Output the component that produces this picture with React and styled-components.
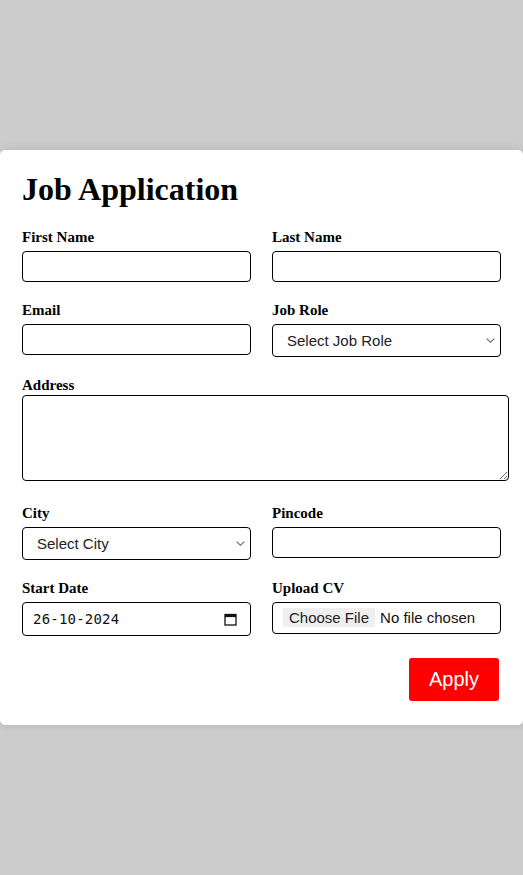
import React from "react";
import styled, { createGlobalStyle } from "styled-components";

const chevron =
  "data:image/svg+xml,%3Csvg xmlns='http://www.w3.org/2000/svg' width='9' height='5' viewBox='0 0 9 5'%3E%3Cpolyline points='0.6,0.6 4.5,4.2 8.4,0.6' fill='none' stroke='%23707070' stroke-width='1.2'/%3E%3C/svg%3E";

export default function App() {
  return (
    <>
      <GlobalStyle />
      <Card>
        <Title>Job Application</Title>
        <Form onSubmit={(e) => e.preventDefault()}>
          <Grid>
            <Field>
              <Label>First Name</Label>
              <Input type="text" />
            </Field>
            <Field>
              <Label>Last Name</Label>
              <Input type="text" />
            </Field>
            <Field>
              <Label>Email</Label>
              <Input type="email" />
            </Field>
            <Field>
              <Label>Job Role</Label>
              <Select defaultValue="">
                <option value="">Select Job Role</option>
                <option>Developer</option>
                <option>Designer</option>
              </Select>
            </Field>
            <Field $wide>
              <Label $tight>Address</Label>
              <TextArea />
            </Field>
            <Field>
              <Label>City</Label>
              <Select defaultValue="">
                <option value="">Select City</option>
                <option>Mumbai</option>
                <option>Delhi</option>
              </Select>
            </Field>
            <Field>
              <Label>Pincode</Label>
              <Input type="text" />
            </Field>
            <Field>
              <Label>Start Date</Label>
              <DateBox>
                <DateText type="text" defaultValue="26-10-2024" />
                <CalendarIcon />
              </DateBox>
            </Field>
            <Field>
              <Label>Upload CV</Label>
              <FileInput type="file" />
            </Field>
          </Grid>
          <Actions>
            <ApplyButton type="submit">Apply</ApplyButton>
          </Actions>
        </Form>
      </Card>
    </>
  );
}

function CalendarIcon() {
  return (
    <svg width="13" height="13" viewBox="0 0 13 13" aria-hidden="true">
      <rect x="1" y="1.5" width="11" height="10.5" fill="none" stroke="#111" strokeWidth="1.3" />
      <rect x="1" y="1.5" width="11" height="2.6" fill="#111" />
    </svg>
  );
}

const GlobalStyle = createGlobalStyle`
  body {
    margin: 0;
    background: #cccccc;
    font-family: "Liberation Serif", "Times New Roman", serif;
  }
  #root {
    min-height: 100vh;
    display: flex;
    align-items: center;
    justify-content: center;
  }
`;

const Card = styled.div`
  background: #fff;
  border-radius: 5px;
  box-shadow: 0 0 10px rgba(0, 0, 0, 0.12);
  box-sizing: border-box;
  max-width: 600px;
  padding: 21px 22px 24px;
  width: 100%;
`;

const Title = styled.h1`
  color: #000;
  font-size: 32px;
  font-weight: bold;
  margin: 0 0 21px;
`;

const Form = styled.form`
  display: flex;
  flex-direction: column;
`;

const Grid = styled.div`
  display: grid;
  gap: 20px 21px;
  grid-template-columns: 1fr 1fr;
`;

const Field = styled.div`
  display: flex;
  flex-direction: column;
  grid-column: ${({ $wide }) => ($wide ? "1 / -1" : "auto")};
`;

const Label = styled.label`
  color: #000;
  font-size: 15px;
  font-weight: bold;
  margin-bottom: ${({ $tight }) => ($tight ? "1px" : "5px")};
`;

const Input = styled.input`
  border: 1px solid #000;
  border-radius: 4px;
  box-sizing: border-box;
  font-family: "Liberation Sans", Arial, sans-serif;
  font-size: 15px;
  height: 31px;
  padding: 0 10px;
  width: 100%;
`;

const Select = styled.select`
  appearance: none;
  background: #fff url("${chevron}") no-repeat right 5px center / 9px 5px;
  border: 1px solid #000;
  border-radius: 4px;
  box-sizing: border-box;
  color: #222;
  font-family: "Liberation Sans", Arial, sans-serif;
  font-size: 15px;
  height: 33px;
  padding: 0 24px 0 14px;
  width: 100%;
`;

const TextArea = styled.textarea`
  border: 1px solid #000;
  border-radius: 4px;
  box-sizing: content-box;
  height: 80px;
  margin-bottom: 4px;
  padding: 2px 3px;
  resize: vertical;
  width: 100%;
`;

const DateBox = styled.div`
  align-items: center;
  border: 1px solid #000;
  border-radius: 4px;
  box-sizing: border-box;
  display: flex;
  height: 34px;
  padding: 0 13px 0 10px;
`;

const DateText = styled.input`
  background: none;
  border: 0;
  color: #111;
  flex: 1;
  font-family: "DejaVu Sans Mono", "Liberation Mono", monospace;
  font-size: 14px;
  letter-spacing: 0.2px;
  min-width: 0;
  outline: none;
  padding: 0;
`;

const FileInput = styled.input`
  border: 1px solid #000;
  border-radius: 4px;
  box-sizing: border-box;
  color: #111;
  font-family: "Liberation Sans", Arial, sans-serif;
  font-size: 15px;
  padding: 5px 10px 6px;
  width: 100%;
  &::file-selector-button {
    background: #efefef;
    border: 0;
    border-radius: 0;
    color: #222;
    font-family: inherit;
    font-size: 15px;
    margin-right: 5px;
    padding: 1px 6px;
  }
`;

const Actions = styled.div`
  display: flex;
  justify-content: flex-end;
  margin-top: 22px;
`;

const ApplyButton = styled.button`
  background: #ff0000;
  border: 0;
  border-radius: 3px;
  color: #fff;
  cursor: pointer;
  font-family: "Liberation Sans", Arial, sans-serif;
  font-size: 20px;
  margin-right: 2px;
  padding: 10px 20px;
`;
